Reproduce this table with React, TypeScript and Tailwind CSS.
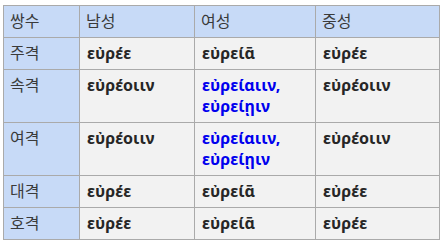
import React from "react";

const H = "bg-[#c7daf7] text-[#3a3a3a] text-[16px] font-normal align-top text-left border border-[#aaaaaa] px-[6px] py-[5px]";
const D = "bg-[#f2f2f2] text-[16px] align-top text-left border border-[#aaaaaa] px-[7px] py-[5px] font-bold text-[#262626]";

const rows: [string, React.ReactNode, React.ReactNode, React.ReactNode][] = [
  ["주격", "εὐρέε", "εὐρείᾱ", "εὐρέε"],
  ["속격", "εὐρέοιιν", <span className="text-[#0000ee]">εὐρείαιιν,<br />εὐρείῃιν</span>, "εὐρέοιιν"],
  ["여격", "εὐρέοιιν", <span className="text-[#0000ee]">εὐρείαιιν,<br />εὐρείῃιν</span>, "εὐρέοιιν"],
  ["대격", "εὐρέε", "εὐρείᾱ", "εὐρέε"],
  ["호격", "εὐρέε", "εὐρείᾱ", "εὐρέε"],
];

export default function App() {
  return (
    <div className="w-[443px] h-[246px] bg-white pl-[3px] pt-[5px]" style={{ fontFamily: '"Noto Sans", "Noto Sans CJK KR", sans-serif' }}>
      <table className="border-collapse leading-[21px] table-fixed w-[436px]">
        <colgroup>
          <col className="w-[76px]" />
          <col className="w-[115px]" />
          <col className="w-[121px]" />
          <col className="w-[124px]" />
        </colgroup>
        <thead>
          <tr>
            <th className={H}>쌍수</th>
            <th className={H}>남성</th>
            <th className={H}>여성</th>
            <th className={H}>중성</th>
          </tr>
        </thead>
        <tbody>
          {rows.map((r) => (
            <tr key={r[0]}>
              <th className={H}>{r[0]}</th>
              <td className={D}>{r[1]}</td>
              <td className={D}>{r[2]}</td>
              <td className={D}>{r[3]}</td>
            </tr>
          ))}
        </tbody>
      </table>
    </div>
  );
}
